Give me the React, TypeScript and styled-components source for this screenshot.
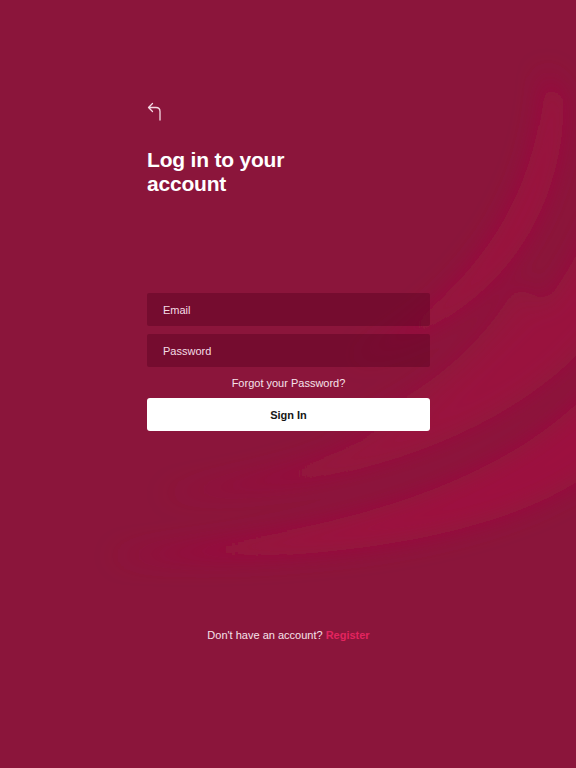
import React from "react";
import styled, { createGlobalStyle } from "styled-components";

const GlobalStyle = createGlobalStyle`
  html, body {
    margin: 0;
    padding: 0;
    background: #8b153b;
  }
  * {
    box-sizing: border-box;
  }
`;

const Screen = styled.div`
  position: relative;
  width: 576px;
  height: 768px;
  overflow: hidden;
  background: #8b153b;
  font-family: "Liberation Sans", Arial, sans-serif;
  color: #fff;
`;

const Swooshes = styled.svg`
  position: absolute;
  inset: 0;
  width: 576px;
  height: 768px;
  pointer-events: none;
`;

const Content = styled.div`
  position: relative;
  display: flex;
  flex-direction: column;
  height: 100%;
  padding: 101px 146px 0 147px;
`;

const BackButton = styled.button`
  width: 16px;
  height: 20px;
  padding: 0;
  border: none;
  background: none;
  cursor: pointer;
  display: flex;
`;

const Title = styled.h1`
  margin: 27px 0 0;
  width: 150px;
  font-size: 21px;
  font-weight: 700;
  line-height: 24px;
  letter-spacing: -0.2px;
  color: #fff;
`;

const Form = styled.form`
  display: flex;
  flex-direction: column;
  margin-top: 97px;
  gap: 8px;
`;

const Field = styled.input`
  height: 33px;
  border: none;
  border-radius: 2px;
  padding: 0 16px;
  background: rgba(100, 6, 38, 0.55);
  color: #fff;
  font-family: inherit;
  font-size: 11px;
  outline: none;

  &::placeholder {
    color: #f4dce5;
  }
`;

const Forgot = styled.a`
  align-self: center;
  margin: 2px 0 1px;
  font-size: 11px;
  color: #f6e2ea;
  text-decoration: none;
`;

const SignIn = styled.button`
  height: 33px;
  border: none;
  border-radius: 3px;
  background: #fff;
  color: #161616;
  font-family: inherit;
  font-size: 11px;
  font-weight: 700;
  cursor: pointer;
`;

const Footer = styled.p`
  margin: 198px 0 0;
  text-align: center;
  font-size: 11px;
  color: #f6e2ea;
`;

const RegisterLink = styled.a<{ $accent: string }>`
  color: ${(p) => p.$accent};
  font-weight: 700;
  text-decoration: none;
`;

const BackIcon = () => (
  <svg width="16" height="20" viewBox="0 0 16 20" fill="none">
    <path
      d="M5.5 2.5 L1.5 6.5 L5.5 10.5 M1.5 6.5 H9 Q13 6.5 13 10.5 V19"
      stroke="#f4d9e3"
      strokeWidth="1.3"
      strokeLinecap="round"
      strokeLinejoin="round"
    />
  </svg>
);

const App: React.FC = () => {
  return (
    <>
      <GlobalStyle />
      <Screen>
        <Swooshes viewBox="0 0 576 768">
          <defs>
            <filter id="soft" filterUnits="userSpaceOnUse" x="0" y="0" width="576" height="768">
              <feGaussianBlur stdDeviation="12" />
            </filter>
          </defs>
          <g filter="url(#soft)" fill="#a0103f">
            <path d="M545 70 C540 200 470 300 350 360 C490 320 560 230 565 100 Z" opacity="0.85" />
            <path d="M600 200 C560 320 460 410 300 465 C240 482 190 490 160 494 C340 492 510 440 600 330 Z" opacity="0.7" />
            <path d="M600 380 C520 470 380 530 110 556 C360 568 530 525 600 465 Z" opacity="0.85" />
            <path d="M520 280 C480 350 420 400 330 432 C440 412 500 370 545 310 Z" opacity="0.55" />
          </g>
        </Swooshes>
        <Content>
          <BackButton aria-label="Back">
            <BackIcon />
          </BackButton>
          <Title>Log in to your account</Title>
          <Form onSubmit={(e) => e.preventDefault()}>
            <Field type="email" placeholder="Email" />
            <Field type="password" placeholder="Password" />
            <Forgot href="#">Forgot your Password?</Forgot>
            <SignIn type="submit">Sign In</SignIn>
          </Form>
          <Footer>
            Don't have an account? <RegisterLink $accent="#e3245f" href="#">Register</RegisterLink>
          </Footer>
        </Content>
      </Screen>
    </>
  );
};

export default App;
